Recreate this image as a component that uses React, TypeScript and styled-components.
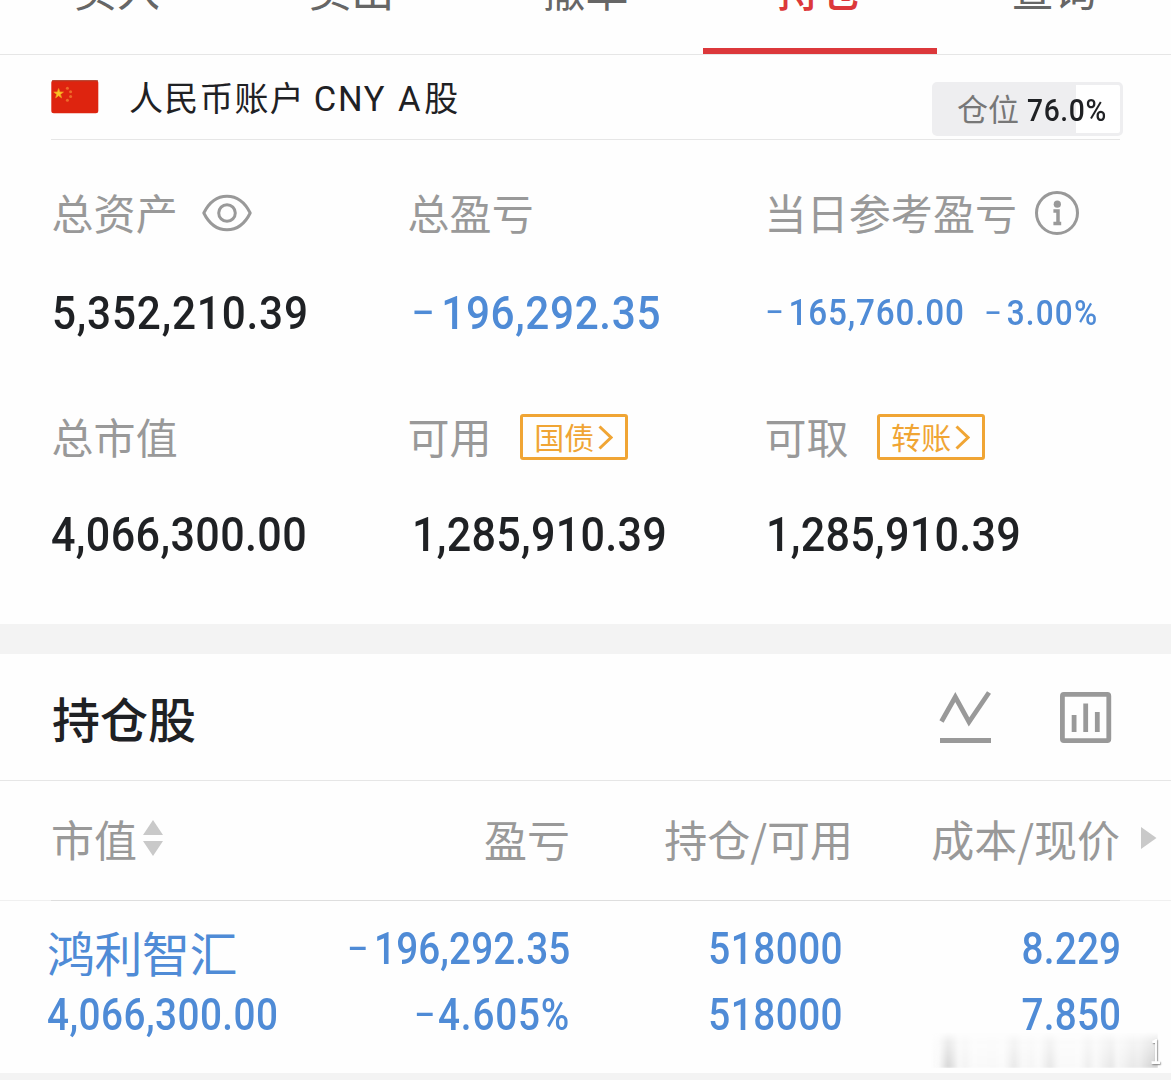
import React from 'react';
import styled, { createGlobalStyle } from 'styled-components';

const colors = {
  ink: '#1f2124',
  label: '#999999',
  blue: '#4f8bd6',
  red: '#dc383b',
  orange: '#f0a534',
  strip: '#f3f3f3',
  line: '#e6e6e6',
};

const cjk = '"Noto Sans CJK SC", "Noto Sans", sans-serif';
const digits = 'Roboto, "Noto Sans CJK SC", sans-serif';

const GlobalStyle = createGlobalStyle`
  * { box-sizing: border-box; }
  html, body { margin: 0; padding: 0; background: #fff; }
  body { overflow: hidden; }
`;

const Page = styled.main`
  width: 1171px;
  height: 1080px;
  overflow: hidden;
  background: #fefefe;
  font-family: ${cjk};
  color: ${colors.ink};
  white-space: nowrap;
`;

const Tabs = styled.nav`
  display: grid;
  grid-template-columns: repeat(5, 1fr);
  height: 55px;
  overflow: hidden;
  border-bottom: 1px solid ${colors.line};
`;

const Tab = styled.div<{ $active?: boolean }>`
  height: 54px;
  text-align: center;
  font-size: 43px;
  line-height: 44px;
  font-weight: ${p => (p.$active ? 500 : 400)};
  color: ${p => (p.$active ? colors.red : '#666')};
  border-bottom: 6px solid ${p => (p.$active ? colors.red : 'transparent')};
`;

const TabLabel = styled.span`
  display: block;
  margin-top: -34px;
`;

const AccountBar = styled.header`
  display: flex;
  justify-content: space-between;
  height: 85px;
  margin: 0 51px 0 51px;
  border-bottom: 1px solid ${colors.line};
`;

const AccountName = styled.div`
  display: flex;
  align-items: flex-start;
  gap: 30px;
  padding-top: 25px;
`;

const AccountText = styled.span`
  font-size: 34px;
  line-height: 34px;
  letter-spacing: 1.2px;
`;

const Latin = styled.span`
  margin-right: 2px;
  font-family: ${digits};
  font-size: 34.5px;
  letter-spacing: 1.7px;
  word-spacing: 1.5px;
`;

const Position = styled.div`
  display: flex;
  align-items: center;
  width: 191px;
  height: 54px;
  margin: 27px -3px 0 0;
  padding: 2px 0 0 22px;
  gap: 8px;
  border: 3px solid #eeeef0;
  border-radius: 5px;
  background: linear-gradient(to right, #eeeef0 141px, #fff 141px);
`;

const PositionLabel = styled.span`
  font-size: 31px;
  line-height: 40px;
  margin-top: -4px;
  color: #777;
`;

/* Condensed figures: Roboto narrowed around the edge it is aligned to. */
const Figure = styled.span<{
  $size: number;
  $gap?: number;
  $squeeze?: number;
  $color?: string;
  $end?: boolean;
  $lead?: number;
}>`
  display: inline-block;
  font-family: ${digits};
  font-weight: 500;
  font-size: ${p => p.$size}px;
  letter-spacing: ${p => p.$gap ?? 0}px;
  color: ${p => p.$color ?? colors.ink};
  margin-left: ${p => p.$lead ?? 0}px;
  transform: scaleX(${p => p.$squeeze ?? 0.88});
  transform-origin: ${p => (p.$end ? 'right' : 'left')} center;
`;

const Minus = styled.span<{ $after: number }>`
  font-weight: 400;
  margin-right: ${p => p.$after}px;
`;

type NumProps = React.ComponentProps<typeof Figure> & { text: string; after?: number };

const Num = ({ text, after = 6, ...rest }: NumProps) => (
  <Figure {...rest}>
    {text.startsWith('−') ? (
      <>
        <Minus $after={after}>−</Minus>
        {text.slice(1)}
      </>
    ) : (
      text
    )}
  </Figure>
);

const SummaryGrid = styled.section`
  display: grid;
  grid-template-columns: 356px 357px 1fr;
  grid-template-rows: 224px 1fr;
  height: 484px;
  padding: 49px 0 0 51px;
`;

const Cell = styled.div`
  display: flex;
  flex-direction: column;
`;

const Label = styled.div<{ $gap: number }>`
  display: flex;
  align-items: center;
  gap: ${p => p.$gap}px;
  height: 45px;
  font-size: 42px;
  line-height: 45px;
  letter-spacing: 0.1px;
  padding-left: 0.5px;
  color: ${colors.label};

  svg, button { flex: none; margin-top: 3px; }
  button svg { margin-top: 0; }
`;

const Value = styled.div<{ $top: number }>`
  display: flex;
  align-items: baseline;
  height: 56px;
  margin-top: ${p => p.$top}px;
  line-height: 56px;
`;

const DayValue = styled(Value)`
  display: grid;
  grid-template-columns: 219px 1fr;
`;

const Tag = styled.button`
  display: flex;
  align-items: center;
  justify-content: center;
  gap: 4px;
  width: 108px;
  height: 46px;
  padding: 0;
  border: 3px solid ${colors.orange};
  border-radius: 3px;
  background: transparent;
  font-family: ${cjk};
  font-size: 30px;
  line-height: 38px;
  color: ${colors.orange};
`;

const TagText = styled.span`
  margin-top: -3px;
`;

const Strip = styled.div<{ $h: number }>`
  height: ${p => p.$h}px;
  background: ${colors.strip};
`;

const HoldingsHead = styled.header`
  display: flex;
  align-items: center;
  justify-content: space-between;
  height: 127px;
  padding: 0 59px 0 52px;
  border-bottom: 1px solid ${colors.line};
`;

const HoldingsTitle = styled.h2`
  margin: -1px 0 0;
  font-size: 48px;
  line-height: 60px;
  font-weight: 500;
`;

const HeadIcons = styled.div`
  display: flex;
  gap: 68px;
`;

const TableHead = styled.div`
  display: grid;
  grid-template-columns: 234px 285px 283px 267px 1fr;
  align-items: center;
  height: 119px;
  padding: 0 0 5px 51px;
  font-size: 43px;
  line-height: 44px;
  color: ${colors.label};
`;

const HeadCell = styled.div<{ $left?: boolean; $inset?: number }>`
  display: flex;
  align-items: center;
  justify-content: ${p => (p.$left ? 'flex-start' : 'flex-end')};
  gap: 6px;
  padding-left: ${p => p.$inset ?? 0}px;
`;

const Rule = styled.div`
  height: 1px;
  background: linear-gradient(to right, #f0f0f0 51px, #dedede 51px 1120px, #f0f0f0 1120px);
`;

const HoldingRow = styled.div`
  display: grid;
  grid-template-columns: 234px 289px 273px 278px 1fr;
  height: 172px;
  padding: 15px 0 0 47px;
  position: relative;
`;

const HoldingCell = styled.div<{ $left?: boolean }>`
  display: flex;
  flex-direction: column;
  align-items: ${p => (p.$left ? 'flex-start' : 'flex-end')};
  line-height: 66px;
`;

const StockName = styled.span`
  height: 66px;
  font-size: 48px;
  line-height: 70px;
  letter-spacing: -0.5px;
  color: ${colors.blue};
`;

const Watermark = styled.div`
  position: absolute;
  right: 8px;
  bottom: 5px;
  width: 232px;
  height: 36px;
  display: flex;
  justify-content: flex-end;
  align-items: center;
`;

const WatermarkText = styled.span`
  position: relative;
  font-family: ${cjk};
  font-size: 35px;
  line-height: 30px;
  margin: -2px 2px 0 0;
  transform: scaleX(0.6);
  transform-origin: right center;
  color: #fff;
  text-shadow: 1px 1px 2px #888;
`;

const Smear = styled.div`
  position: absolute;
  inset: 0 5px 0 0;
  filter: blur(1.2px);
  background: linear-gradient(to right,
    transparent 0, #f8f8f8 8px, #d6d6d6 17px, #e0e0e0 21px, #f8f8f8 28px, #f3f3f3 34px,
    #fafafa 42px, #f8f8f8 64px, #fbfbfb 72px, #e9e9e9 83px, #f8f8f8 92px, #f5f5f5 100px,
    #fafafa 108px, #e7e7e7 119px, #f9f9f9 128px, #fafafa 148px, #eeeeee 157px,
    #f8f8f8 165px, #e7e7e7 180px, #f6f6f6 187px, #e8e8e8 202px, #ebebeb 208px, #cccccc 226px);
  mask-image: linear-gradient(to bottom, transparent 0, rgba(0,0,0,.45) 10px, #000 100%);
`;

const EyeIcon = () => (
  <svg width="50" height="38" viewBox="0 0 50 38" fill="none" stroke={colors.label} strokeWidth="3">
    <path d="M1.8 19C7 8.5 15 2.2 25 2.2S43 8.5 48.2 19C43 29.5 35 35.8 25 35.8S7 29.5 1.8 19Z" strokeLinejoin="round" />
    <circle cx="25" cy="19" r="8.3" />
  </svg>
);

const InfoIcon = () => (
  <svg width="46" height="46" viewBox="0 0 46 46" fill="none" stroke={colors.label}>
    <circle cx="23" cy="23" r="20.5" strokeWidth="3" />
    <circle cx="23.3" cy="14.2" r="3.6" fill={colors.label} stroke="none" />
    <path d="M19.4 21H24V33.6M19.4 33.6H27.2" strokeWidth="3.5" />
  </svg>
);

const Chevron = () => (
  <svg width="15" height="26" viewBox="0 0 15 26" fill="none" stroke={colors.orange} strokeWidth="3">
    <path d="M1.5 2.5L13 13.5L1.5 24.5" />
  </svg>
);

const TrendIcon = () => (
  <svg width="53" height="54" viewBox="0 0 53 54" fill="none" stroke={colors.label} strokeWidth="4.8">
    <path d="M2.5 31.5L16.3 7L30 32L50 2.5" />
    <path d="M1 50.5H52" strokeWidth="5" />
  </svg>
);

const BarsIcon = () => (
  <svg width="52" height="54" viewBox="0 0 52 54" fill="none" stroke={colors.label} strokeWidth="4.8">
    <rect x="2.4" y="4.4" width="46.4" height="46.2" rx="1.5" />
    <path d="M14.1 25V42M25.7 13.5V42M37.3 22V42" />
  </svg>
);

const SortIcon = () => (
  <svg width="20" height="36" viewBox="0 0 20 36" fill="#c9c9c9">
    <path d="M10 0L20 15H0ZM10 36L0 21H20Z" />
  </svg>
);

const NextIcon = () => (
  <svg width="16" height="22" viewBox="0 0 16 22" fill="#c9c9c9">
    <path d="M0 0L15.5 11L0 22Z" />
  </svg>
);

const Flag = () => (
  <svg width="48" height="34" viewBox="0 0 48 34">
    <rect x="0.3" y="0.3" width="47" height="33" rx="2.5" fill="#de240f" />
    <path d="M1 .8H47" stroke="#a9442f" strokeWidth="1" />
    <path d="M7.6 8.6L8.8 12L12.4 12.1L9.5 14.3L10.5 17.8L7.6 15.7L4.7 17.8L5.7 14.3L2.8 12.1L6.4 12Z" fill="#fbc524" stroke="#f39a1f" strokeWidth="0.8" />
    <g fill="#ee6a2a">
      <circle cx="16.4" cy="8.3" r="1.5" />
      <circle cx="19.6" cy="11.8" r="1.5" />
      <circle cx="19.6" cy="16.6" r="1.5" />
      <circle cx="16.4" cy="20.3" r="1.5" />
    </g>
  </svg>
);

const tabs = ['买入', '卖出', '撤单', '持仓', '查询'];

export default function App() {
  return (
    <>
      <GlobalStyle />
      <Page>
        <Tabs>
          {tabs.map(t => (
            <Tab key={t} $active={t === '持仓'}>
              <TabLabel>{t}</TabLabel>
            </Tab>
          ))}
        </Tabs>

        <AccountBar>
          <AccountName>
            <Flag />
            <AccountText>
              人民币账户 <Latin>CNY A</Latin>股
            </AccountText>
          </AccountName>
          <Position>
            <PositionLabel>仓位</PositionLabel>
            <Num text="76.0%" $size={31} $gap={0.7} $squeeze={0.91} />
          </Position>
        </AccountBar>

        <SummaryGrid>
          <Cell>
            <Label $gap={24}>总资产<EyeIcon /></Label>
            <Value $top={51}><Num text="5,352,210.39" $size={47} $gap={0.9} $squeeze={0.9} $lead={1} /></Value>
          </Cell>
          <Cell>
            <Label $gap={24}>总盈亏</Label>
            <Value $top={51}>
              <Num text="−196,292.35" $size={47} $gap={0.7} $squeeze={0.9} $lead={4} $color={colors.blue} />
            </Value>
          </Cell>
          <Cell>
            <Label $gap={17}>当日参考盈亏<InfoIcon /></Label>
            <DayValue $top={51}>
              <Num text="−165,760.00" $size={37} $gap={0.9} $squeeze={0.9} $lead={1} after={4} $color={colors.blue} />
              <Num text="−3.00%" $size={35} $gap={1.3} $squeeze={0.9} $lead={1} after={4} $color={colors.blue} />
            </DayValue>
          </Cell>
          <Cell>
            <Label $gap={29}>总市值</Label>
            <Value $top={49}><Num text="4,066,300.00" $size={49} $gap={0.4} /></Value>
          </Cell>
          <Cell>
            <Label $gap={28}>可用<Tag><TagText>国债</TagText><Chevron /></Tag></Label>
            <Value $top={49}><Num text="1,285,910.39" $size={49} $gap={0.3} $lead={5} /></Value>
          </Cell>
          <Cell>
            <Label $gap={28}>可取<Tag><TagText>转账</TagText><Chevron /></Tag></Label>
            <Value $top={49}><Num text="1,285,910.39" $size={49} $gap={0.3} $lead={2} /></Value>
          </Cell>
        </SummaryGrid>

        <Strip $h={30} />

        <HoldingsHead>
          <HoldingsTitle>持仓股</HoldingsTitle>
          <HeadIcons>
            <TrendIcon />
            <BarsIcon />
          </HeadIcons>
        </HoldingsHead>

        <TableHead>
          <HeadCell $left>市值<SortIcon /></HeadCell>
          <HeadCell>盈亏</HeadCell>
          <HeadCell>持仓/可用</HeadCell>
          <HeadCell>成本/现价</HeadCell>
          <HeadCell $left $inset={21}><NextIcon /></HeadCell>
        </TableHead>
        <Rule />

        <HoldingRow>
          <HoldingCell $left>
            <StockName>鸿利智汇</StockName>
            <Num text="4,066,300.00" $size={44} $gap={0.5} $color={colors.blue} />
          </HoldingCell>
          <HoldingCell>
            <Num text="−196,292.35" $size={44} $gap={0.1} $end $color={colors.blue} />
            <Num text="−4.605%" $size={44} $gap={0.9} $end after={2} $color={colors.blue} />
          </HoldingCell>
          <HoldingCell>
            <Num text="518000" $size={44} $gap={0.5} $end $color={colors.blue} />
            <Num text="518000" $size={44} $gap={0.5} $end $color={colors.blue} />
          </HoldingCell>
          <HoldingCell>
            <Num text="8.229" $size={44} $gap={0.2} $end $color={colors.blue} />
            <Num text="7.850" $size={44} $gap={0.2} $end $color={colors.blue} />
          </HoldingCell>
          <Watermark>
            <Smear />
            <WatermarkText>1</WatermarkText>
          </Watermark>
        </HoldingRow>
        <Strip $h={8} />
      </Page>
    </>
  );
}
